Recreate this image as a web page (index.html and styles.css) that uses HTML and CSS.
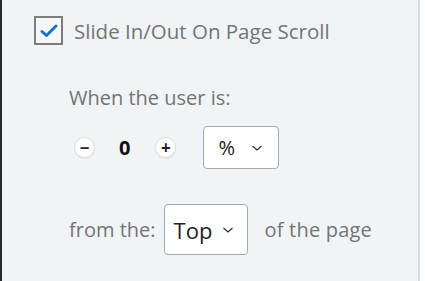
FILE: index.html
```html
<!DOCTYPE html>
<html>
<head>
<meta charset="utf-8">
<link rel="stylesheet" href="styles.css">
</head>
<body>
<div class="panel">
  <div class="check-row">
    <span class="checkbox">
      <svg width="18" height="14" viewBox="0 0 18 14"><path d="M2 7.5 L6.5 11.5 L16 2" fill="none" stroke="#1a73c8" stroke-width="3" stroke-linecap="round" stroke-linejoin="round"/></svg>
    </span>
    <span class="check-label">Slide In/Out On Page Scroll</span>
  </div>
  <div class="section">
    <div class="label">When the user is:</div>
    <div class="stepper-row">
      <span class="circle">&minus;</span>
      <span class="value">0</span>
      <span class="circle">+</span>
      <span class="select sel-pct">%<svg class="chev" width="12" height="8" viewBox="0 0 12 8"><path d="M1.5 2 L6 6 L10.5 2" fill="none" stroke="#333" stroke-width="1.3"/></svg></span>
    </div>
    <div class="from-row">
      <span class="label">from the:</span>
      <span class="select sel-top">Top<svg class="chev" width="12" height="8" viewBox="0 0 12 8"><path d="M1.5 2 L6 6 L10.5 2" fill="none" stroke="#333" stroke-width="1.3"/></svg></span>
      <span class="label after">of the page</span>
    </div>
  </div>
</div>
</body>
</html>
```
FILE: styles.css
```css
html, body {
  margin: 0;
  padding: 0;
  background: #ffffff;
}
body {
  font-family: "Open Sans", "Liberation Sans", sans-serif;
}
.panel {
  box-sizing: border-box;
  width: 420px;
  height: 281px;
  background: #f1f4f7;
  border-left: 2px solid #2a2a2a;
  border-right: 2px solid #d9dde1;
  padding: 16px 0 0 32px;
}
.check-row {
  display: flex;
  align-items: center;
}
.checkbox {
  box-sizing: border-box;
  width: 29px;
  height: 29px;
  border: 2px solid #7d7d7d;
  background: #f4f6f9;
  display: flex;
  align-items: center;
  justify-content: center;
}
.check-label {
  margin-left: 11px;
  font-size: 20.5px;
  font-weight: 500;
  color: #747474;
}
.section {
  padding-left: 35px;
  margin-top: 39px;
}
.label {
  font-size: 20px;
  font-weight: 500;
  color: #747474;
}
.stepper-row {
  display: flex;
  align-items: center;
  margin-top: 15px;
  padding-left: 5px;
}
.circle {
  box-sizing: border-box;
  width: 21px;
  height: 21px;
  border-radius: 50%;
  background: #ffffff;
  border: 1px solid #dcdcdc;
  box-shadow: 0 1px 1px rgba(0, 0, 0, 0.06);
  display: flex;
  align-items: center;
  justify-content: center;
  font-size: 17px;
  font-weight: bold;
  color: #222;
  line-height: 1;
}
.value {
  font-size: 20px;
  font-weight: bold;
  color: #111;
  margin: 0 25px 0 24px;
}
.select {
  box-sizing: border-box;
  display: flex;
  align-items: center;
  background: #ffffff;
  border: 1px solid #a9a9a9;
  border-radius: 4px;
  color: #222;
}
.sel-pct {
  width: 76px;
  height: 43px;
  margin-left: 27px;
  padding-left: 14px;
  font-size: 20px;
}
.sel-pct .chev {
  margin-left: 16px;
}
.from-row {
  display: flex;
  align-items: center;
  margin-top: 35px;
}
.sel-top {
  width: 84px;
  height: 51px;
  margin-left: 8px;
  padding-left: 9px;
  font-size: 22px;
}
.sel-top .chev {
  margin-left: 10px;
}
.after {
  margin-left: 17px;
  letter-spacing: 0.2px;
}
```
